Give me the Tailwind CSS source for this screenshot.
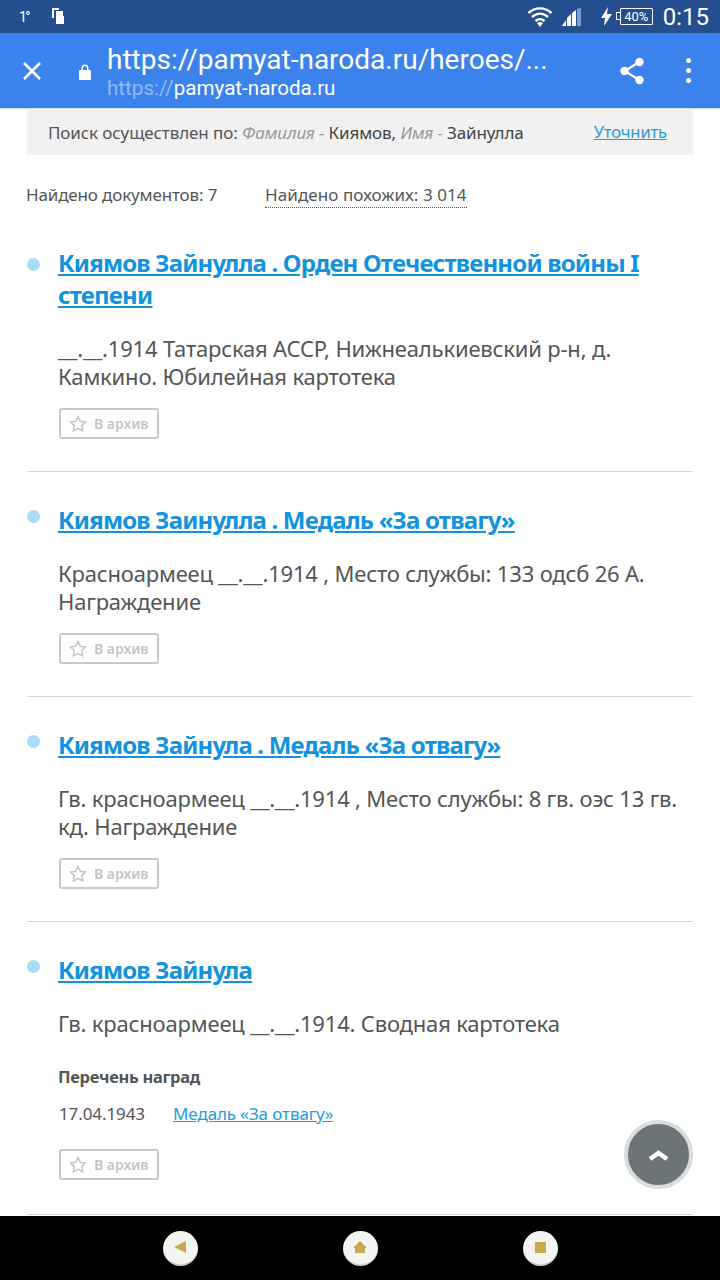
<!DOCTYPE html>
<html lang="ru">
  <head>
    <meta charset="UTF-8" />
    <title>Память народа</title>
    <meta name="viewport" content="width=device-width, initial-scale=1.0" />
    <script src="https://cdn.jsdelivr.net/npm/@tailwindcss/browser@4"></script>
  </head>
  <body class="bg-white font-['Noto_Sans',sans-serif] text-[#555]">
    <div class="relative w-[720px] h-[1280px] overflow-hidden flex flex-col">
      <!-- status bar -->
      <div class="h-[33px] shrink-0 bg-[#254e8e] flex items-center text-white font-['Roboto',sans-serif]">
        <span class="ml-[19px] w-[12px] text-[14px] leading-none tracking-[-1.500px]">1°</span>
        <svg class="ml-[20px]" width="13" height="17" viewBox="0 0 13 17" fill="#fff">
          <path d="M1 0h7v2H3v8H1z" />
          <path d="M5 3h7v5h1v8H5z" />
        </svg>
        <svg class="ml-auto" width="26" height="22" viewBox="0 0 26 22" fill="none" stroke="#fff" stroke-width="2.400">
          <path d="M1.500 7C8.500 .8 17.500 .8 24.500 7" />
          <path d="M5 11C10 6.500 16 6.500 21 11" />
          <path d="M8.500 15C11.500 12.500 14.500 12.500 17.500 15" />
          <path d="M13 21l-3-4c2-1.200 4-1.200 6 0z" fill="#fff" stroke="none" />
        </svg>
        <svg class="ml-[8px]" width="21" height="20" viewBox="0 0 21 20">
          <path d="M16 2l4-1v18h-4z" fill="#7f9cc8" />
          <path d="M11 6l4-3v16h-4z" fill="#fff" />
          <path d="M6 11l4-4v12H6z" fill="#fff" />
          <path d="M1 19l4-6v6z" fill="#fff" />
        </svg>
        <svg class="ml-[19px]" width="11" height="19" viewBox="0 0 11 19" fill="#fff">
          <path d="M7 0L0 11h4l-1 8 8-12H6z" />
        </svg>
        <div class="ml-[8px] relative w-[33px] h-[17px] border-[1.500px] border-white rounded-[1px] flex items-center justify-center text-[13px] leading-none">
          <span class="absolute left-[-5px] top-[3px] w-[4px] h-[8px] border-[1.500px] border-r-0 border-white"></span>
          40%
        </div>
        <span class="ml-[10px] mr-[11px] text-[24px] leading-none">0:15</span>
      </div>

      <!-- browser toolbar -->
      <div class="h-[76px] shrink-0 bg-[#3b82ec] flex items-center text-white font-['Roboto',sans-serif] border-b border-[#cfe0f7]">
        <svg class="ml-[22px]" width="20" height="20" viewBox="0 0 20 20" stroke="#fff" stroke-width="2.600">
          <path d="M2 2l16 16M18 2L2 18" />
        </svg>
        <svg class="ml-[36px] mt-[2px]" width="14" height="18" viewBox="0 0 14 18" fill="#fff">
          <path d="M3.500 7V5a3.500 3.500 0 0 1 7 0v2h1.500a1 1 0 0 1 1 1v8a1 1 0 0 1-1 1H2a1 1 0 0 1-1-1V8a1 1 0 0 1 1-1zM5 7h4V5a2 2 0 0 0-4 0z" />
        </svg>
        <div class="ml-[15px] w-[493px] mt-[2px]">
          <div class="text-[28px] leading-[32px] whitespace-nowrap">https://pamyat-naroda.ru/heroes/...</div>
          <div class="text-[20.600px] leading-[24px] whitespace-nowrap"><span class="text-[#90bcf5]">https://</span>pamyat-naroda.ru</div>
        </div>
        <svg class="ml-[19px]" width="26" height="28" viewBox="0 0 26 28" fill="#fff" stroke="#fff" stroke-width="2.400">
          <path d="M20.500 5L5.500 14l15 9" fill="none" />
          <circle cx="20.500" cy="5" r="3" />
          <circle cx="5.500" cy="14" r="3" />
          <circle cx="20.500" cy="23" r="3" />
        </svg>
        <div class="ml-[41px] flex flex-col gap-[5px]">
          <span class="w-[5px] h-[5px] rounded-full bg-white"></span>
          <span class="w-[5px] h-[5px] rounded-full bg-white"></span>
          <span class="w-[5px] h-[5px] rounded-full bg-white"></span>
        </div>
      </div>

      <!-- content -->
      <div class="flex-1 px-[27px] overflow-hidden">
        <div class="mt-[1px] h-[45px] bg-[#f1f1f1] pl-[21px] pr-[26px] flex items-center justify-between text-[17px] tracking-[-0.100px]">
          <div class="whitespace-nowrap">
            Поиск осуществлен по: <i class="text-[#999]">Фамилия -</i> <span class="text-[#444]">Киямов,</span> <i class="text-[#999]">Имя -</i> <span class="text-[#444]">Зайнулла</span>
          </div>
          <a class="text-[16.500px] text-[#2a9bd8] underline">Уточнить</a>
        </div>

        <div class="mt-[28px] flex text-[17px] leading-[24px] tracking-[-0.150px]">
          <span class="w-[238px] -ml-px">Найдено документов: 7</span>
          <span class="border-b border-dotted border-[#555] ml-px tracking-[0.080px]">Найдено похожих: 3 014</span>
        </div>

        <div class="mt-[39px] relative pl-[32px] pb-[32px] border-b border-[#d9d9d9]">
          <span class="absolute left-0 top-[11px] w-[13px] h-[13px] rounded-full bg-[#a8dcf7]"></span>
          <a class="block -ml-px text-[24px] leading-[32px] font-bold text-[#1392dd] underline tracking-[-0.800px]">Киямов Зайнулла . Орден Отечественной войны I степени</a>
          <p class="mt-[23px] -ml-px text-[22px] leading-[28px] tracking-[-0.180px]">__.__.1914 Татарская АССР, Нижнеалькиевский р-н, д. Камкино. Юбилейная картотека</p>
          <button class="mt-[18px] w-[100px] h-[31px] border-2 border-[#c9c9c9] rounded-[3px] flex items-center pl-[8px] gap-[7px] text-[14px] font-semibold text-[#c4c4c4]">
            <svg width="18" height="18" viewBox="0 0 18 18" fill="none" stroke="#c4c4c4" stroke-width="1.500"><path d="M9 1.500l2.300 4.800 5.200.7-3.800 3.600.9 5.200L9 13.300l-4.600 2.500.9-5.200L1.500 7l5.200-.7z" /></svg>
            В архив
          </button>
        </div>

        <div class="mt-[32px] relative pl-[32px] pb-[32px] border-b border-[#d9d9d9]">
          <span class="absolute left-0 top-[6px] w-[13px] h-[13px] rounded-full bg-[#a8dcf7]"></span>
          <a class="block -ml-px text-[24px] leading-[32px] font-bold text-[#1392dd] underline tracking-[-0.800px]">Киямов Заинулла . Медаль «За отвагу»</a>
          <p class="mt-[23px] -ml-px text-[22px] leading-[28px] tracking-[-0.180px]">Красноармеец __.__.1914 , Место службы: 133 одсб 26 А. Награждение</p>
          <button class="mt-[18px] w-[100px] h-[31px] border-2 border-[#c9c9c9] rounded-[3px] flex items-center pl-[8px] gap-[7px] text-[14px] font-semibold text-[#c4c4c4]">
            <svg width="18" height="18" viewBox="0 0 18 18" fill="none" stroke="#c4c4c4" stroke-width="1.500"><path d="M9 1.500l2.300 4.800 5.200.7-3.800 3.600.9 5.200L9 13.300l-4.600 2.500.9-5.200L1.500 7l5.200-.7z" /></svg>
            В архив
          </button>
        </div>

        <div class="mt-[32px] relative pl-[32px] pb-[32px] border-b border-[#d9d9d9]">
          <span class="absolute left-0 top-[6px] w-[13px] h-[13px] rounded-full bg-[#a8dcf7]"></span>
          <a class="block -ml-px text-[24px] leading-[32px] font-bold text-[#1392dd] underline tracking-[-0.800px]">Киямов Зайнула . Медаль «За отвагу»</a>
          <p class="mt-[23px] -ml-px text-[22px] leading-[28px] tracking-[-0.180px]">Гв. красноармеец __.__.1914 , Место службы: 8 гв. оэс 13 гв. кд. Награждение</p>
          <button class="mt-[18px] w-[100px] h-[31px] border-2 border-[#c9c9c9] rounded-[3px] flex items-center pl-[8px] gap-[7px] text-[14px] font-semibold text-[#c4c4c4]">
            <svg width="18" height="18" viewBox="0 0 18 18" fill="none" stroke="#c4c4c4" stroke-width="1.500"><path d="M9 1.500l2.300 4.800 5.200.7-3.800 3.600.9 5.200L9 13.300l-4.600 2.500.9-5.200L1.500 7l5.200-.7z" /></svg>
            В архив
          </button>
        </div>

        <div class="mt-[32px] relative pl-[32px] pb-[34px] border-b border-[#d9d9d9]">
          <span class="absolute left-0 top-[6px] w-[13px] h-[13px] rounded-full bg-[#a8dcf7]"></span>
          <a class="block -ml-px text-[24px] leading-[32px] font-bold text-[#1392dd] underline tracking-[-0.800px]">Киямов Зайнула</a>
          <p class="mt-[23px] -ml-px text-[22px] leading-[28px] tracking-[-0.180px]">Гв. красноармеец __.__.1914. Сводная картотека</p>
          <p class="mt-[28px] -ml-px text-[16.500px] leading-[24px] font-bold tracking-[-0.300px]">Перечень наград</p>
          <div class="mt-[13px] flex text-[17px] leading-[24px] tracking-[-0.100px]">
            <span class="w-[114px]">17.04.1943</span>
            <a class="text-[#2a9bd8] underline">Медаль «За отвагу»</a>
          </div>
          <button class="mt-[23px] w-[100px] h-[31px] border-2 border-[#c9c9c9] rounded-[3px] flex items-center pl-[8px] gap-[7px] text-[14px] font-semibold text-[#c4c4c4]">
            <svg width="18" height="18" viewBox="0 0 18 18" fill="none" stroke="#c4c4c4" stroke-width="1.500"><path d="M9 1.500l2.300 4.800 5.200.7-3.800 3.600.9 5.200L9 13.300l-4.600 2.500.9-5.200L1.500 7l5.200-.7z" /></svg>
            В архив
          </button>
        </div>
      </div>

      <!-- scroll to top -->
      <div class="absolute left-[624px] top-[1120px] w-[69px] h-[69px] rounded-full bg-[#6c7478] border-[4px] border-[#d9dcdc] flex items-center justify-center">
        <svg width="21" height="12" viewBox="0 0 21 12" fill="none" stroke="#fff" stroke-width="4.500"><path d="M2 10l8.500-6 8.500 6" /></svg>
      </div>

      <!-- android nav -->
      <div class="h-[64px] shrink-0 bg-black relative z-10 flex items-center justify-center gap-[145px]">
        <div class="w-[35px] h-[35px] rounded-full bg-[#f4f4f0] border-b-2 border-[#cfcfcf] flex items-center justify-center">
          <svg width="14" height="14" viewBox="0 0 14 14" fill="#c9a94e"><path d="M1 7l12-6v12z" /></svg>
        </div>
        <div class="w-[35px] h-[35px] rounded-full bg-[#f4f4f0] border-b-2 border-[#cfcfcf] flex items-center justify-center">
          <svg width="14" height="14" viewBox="0 0 14 14" fill="#c9a94e"><path d="M7 1l7 7h-2v5H2V8H0z" /></svg>
        </div>
        <div class="w-[35px] h-[35px] rounded-full bg-[#f4f4f0] border-b-2 border-[#cfcfcf] flex items-center justify-center">
          <span class="w-[11px] h-[11px] bg-[#c9a94e]"></span>
        </div>
      </div>
    </div>
  </body>
</html>
